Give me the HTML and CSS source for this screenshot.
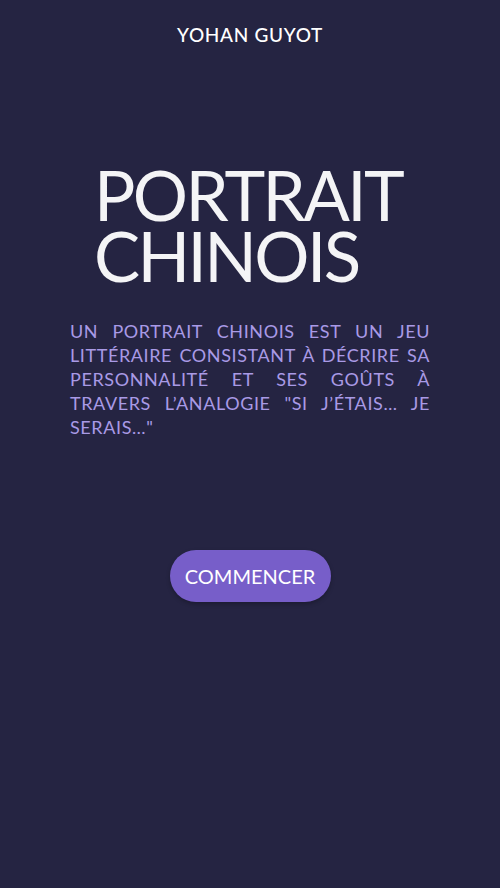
FILE: index.html
```html
<!DOCTYPE html>
<html lang="fr">
<head>
<meta charset="utf-8">
<title>Portrait chinois</title>
<link rel="stylesheet" href="styles.css">
</head>
<body>
<div class="page">
  <header class="header">YOHAN GUYOT</header>
  <main class="hero">
    <h1 class="title">PORTRAIT<br>CHINOIS</h1>
    <p class="intro">UN PORTRAIT CHINOIS EST UN JEU LITTÉRAIRE CONSISTANT À DÉCRIRE SA PERSONNALITÉ ET SES GOÛTS À TRAVERS L’ANALOGIE "SI J’ÉTAIS… JE SERAIS…"</p>
    <div class="actions"><a class="btn" href="#">COMMENCER</a></div>
  </main>
</div>
</body>
</html>
```
FILE: styles.css
```css
html, body {
  margin: 0;
  padding: 0;
  background: #252442;
}
body {
  font-family: "Lato", "Noto Sans", sans-serif;
  width: 500px;
  height: 888px;
  overflow: hidden;
}
.page {
  display: flex;
  flex-direction: column;
  align-items: center;
}
.header {
  margin-top: 23px;
  color: #ffffff;
  font-size: 19px;
  font-weight: 500;
  letter-spacing: 0.7px;
  line-height: 24px;
}
.hero {
  width: 360px;
  display: flex;
  flex-direction: column;
}
.title {
  margin: 117px 0 0 24px;
  color: #f4f4f6;
  font-family: "Lato", sans-serif;
  font-weight: 400;
  font-size: 69px;
  line-height: 61px;
  letter-spacing: -2.6px;
}
.intro {
  margin: 33px 0 0 0;
  color: #a99ae6;
  font-size: 18px;
  line-height: 24px;
  text-align: justify;
  letter-spacing: 0.6px;
}
.actions {
  display: flex;
  justify-content: center;
  margin-top: 111px;
}
.btn {
  display: inline-flex;
  align-items: center;
  justify-content: center;
  width: 161px;
  height: 52px;
  border-radius: 26px;
  background: #775ec9;
  color: #ffffff;
  font-size: 20px;
  text-decoration: none;
  box-shadow: 0 2px 4px rgba(0,0,0,0.25);
}
```
